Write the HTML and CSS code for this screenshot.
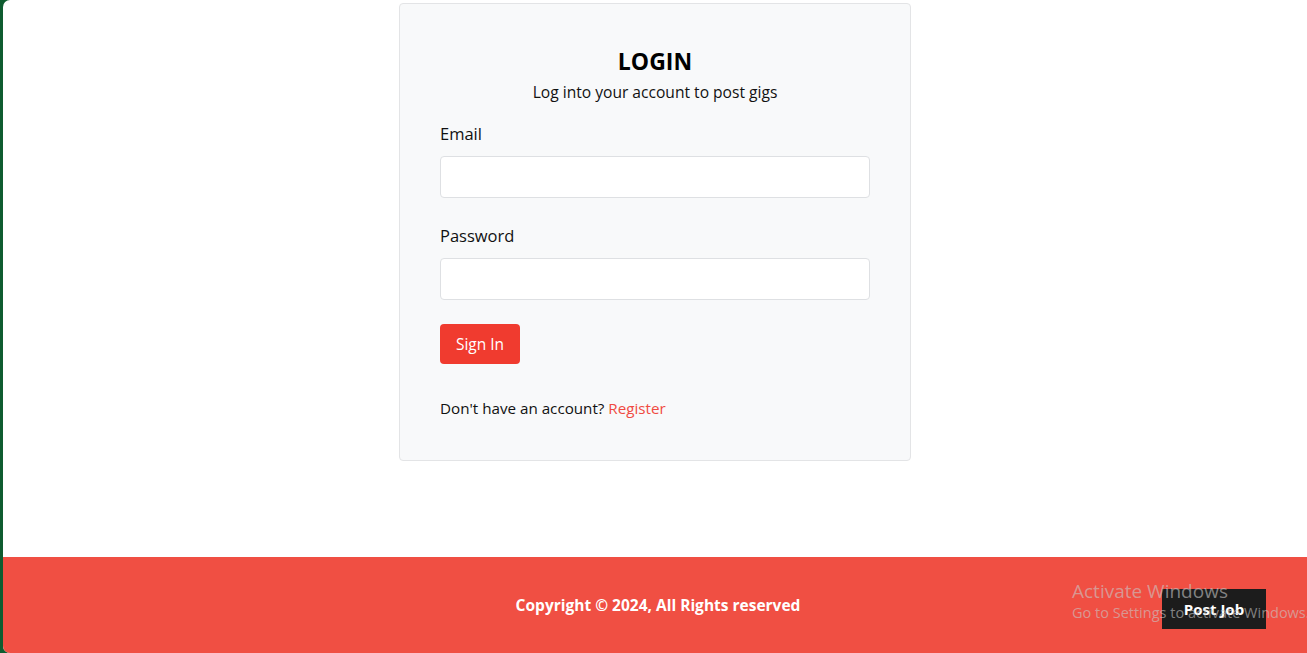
FILE: index.html
```html
<!DOCTYPE html>
<html>
<head>
<meta charset="utf-8">
<link rel="stylesheet" href="styles.css">
</head>
<body>
<div class="frame">
  <main class="main">
    <div class="card">
      <h1 class="title">LOGIN</h1>
      <p class="subtitle">Log into your account to post gigs</p>
      <div class="field">
        <label class="label">Email</label>
        <input class="input" type="email">
      </div>
      <div class="field">
        <label class="label">Password</label>
        <input class="input" type="password">
      </div>
      <button class="btn">Sign In</button>
      <p class="note">Don't have an account? <a class="link" href="#">Register</a></p>
    </div>
  </main>
  <footer class="footer">
    <p class="copy">Copyright © 2024, All Rights reserved</p>
    <a class="post" href="#">Post Job</a>
    <div class="watermark">
      <div class="wm-title">Activate Windows</div>
      <div class="wm-sub">Go to Settings to activate Windows.</div>
    </div>
  </footer>
</div>
</body>
</html>
```
FILE: styles.css
```css
* { box-sizing: border-box; }
html, body { margin: 0; padding: 0; height: 100%; }
body {
  background: #0e5c30;
  font-family: "Open Sans", "Noto Sans", sans-serif;
  color: #111;
  overflow: hidden;
}
.frame {
  margin-left: 3px;
  height: 653px;
  background: #fff;
  border-radius: 7px 0 0 7px;
  overflow: hidden;
  display: flex;
  flex-direction: column;
}
.main {
  height: 557px;
  display: flex;
  justify-content: center;
  padding-top: 3px;
}
.card {
  width: 512px;
  height: 458px;
  background: #f8f9fa;
  border: 1px solid #e3e4e6;
  border-radius: 4px;
  padding: 40px 40px;
}
.title {
  margin: 0;
  text-align: center;
  font-size: 23px;
  font-weight: 700;
  line-height: 34px;
  color: #000;
}
.subtitle {
  margin: 3px 0 0;
  text-align: center;
  font-size: 15.6px;
  line-height: 22px;
}
.field { margin-top: 20px; }
.field + .field { margin-top: 27px; }
.label {
  display: block;
  font-size: 16.5px;
  line-height: 22px;
  margin-bottom: 11px;
}
.input {
  display: block;
  width: 100%;
  height: 42px;
  background: #fff;
  border: 1px solid #dee0e3;
  border-radius: 4px;
}
.btn {
  margin-top: 24px;
  width: 80px;
  height: 40px;
  background: #f03b2f;
  color: #fff;
  border: none;
  border-radius: 4px;
  font-family: inherit;
  font-size: 15.5px;
}
.note {
  margin: 33px 0 0;
  font-size: 15.2px;
  line-height: 22px;
}
.link { color: #f04a42; text-decoration: none; }
.footer {
  position: relative;
  flex: 1;
  background: #f04f43;
  display: flex;
  align-items: center;
  justify-content: center;
}
.copy {
  margin: 0 0 0 6px;
  color: #fff;
  font-weight: 700;
  font-size: 15.5px;
}
.post {
  position: absolute;
  left: 1159px;
  top: 32px;
  width: 104px;
  height: 40px;
  background: #1c1c1c;
  color: #fff;
  font-weight: 700;
  font-size: 15px;
  text-decoration: none;
  display: flex;
  align-items: center;
  justify-content: center;
}
.watermark {
  position: absolute;
  left: 1069px;
  top: 22px;
  color: rgba(200, 200, 200, 0.6);
  white-space: nowrap;
  pointer-events: none;
}
.wm-title { font-size: 19px; line-height: 24px; }
.wm-sub { font-size: 14.5px; line-height: 20px; }
```
